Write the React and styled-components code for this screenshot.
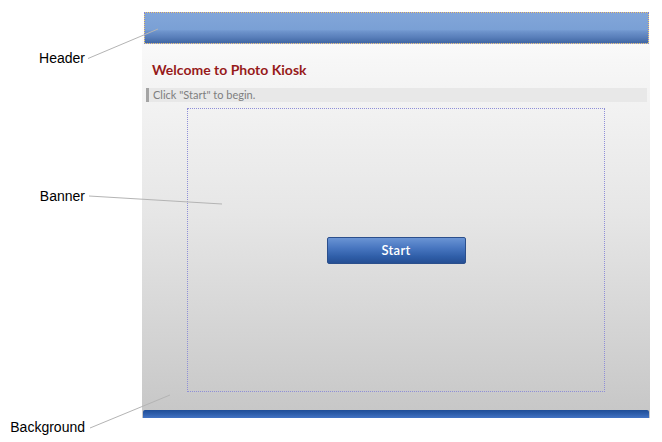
import styled, { createGlobalStyle } from "styled-components";

const GlobalStyle = createGlobalStyle`
  html, body {
    margin: 0;
    padding: 0;
    background: #fff;
  }
`;

const App = () => {
  return (
    <>
      <GlobalStyle />
      <Page>
        <Side>
          <Callout $top={37}>Header</Callout>
          <Callout $top={120}>Banner</Callout>
          <Callout $top={213}>Background</Callout>
        </Side>

        <Screen>
          <Header />
          <Title>Welcome to Photo Kiosk</Title>
          <Hint>
            <HintMark />
            <HintText>Click "Start" to begin.</HintText>
          </Hint>
          <Banner>
            <StartButton>Start</StartButton>
          </Banner>
          <Footer />
        </Screen>

        <Leaders viewBox="0 0 662 442" width="662" height="442">
          <line x1="88" y1="58.5" x2="158" y2="29" />
          <line x1="89" y1="196" x2="222" y2="204" />
          <line x1="90" y1="428" x2="170" y2="395" />
        </Leaders>
      </Page>
    </>
  );
};

export default App;

const Page = styled.div`
  position: relative;
  display: flex;
  width: 662px;
  height: 442px;
  padding-top: 12px;
  box-sizing: border-box;
  overflow: hidden;
`;

const Side = styled.div`
  width: 142px;
  flex-shrink: 0;
  display: flex;
  flex-direction: column;
  align-items: flex-end;
  padding-right: 57px;
  box-sizing: border-box;
`;

const Callout = styled.div`
  margin-top: ${(p) => p.$top}px;
  font-family: "Liberation Sans", Arial, sans-serif;
  font-size: 14px;
  line-height: 18px;
  color: #000;
`;

const Screen = styled.div`
  width: 508px;
  height: 406px;
  display: flex;
  flex-direction: column;
  background: linear-gradient(
    to bottom,
    #ffffff 0%,
    #f7f7f7 12%,
    #e6e6e6 50%,
    #d0d0d0 85%,
    #c6c6c6 100%
  );
`;

const Header = styled.div`
  height: 32px;
  margin: 0 1px 0 2px;
  box-sizing: border-box;
  border: 1px solid #e2d66a;
  outline: 1px dotted #7c7ce0;
  outline-offset: -1px;
  background: linear-gradient(
    to bottom,
    #82a6d9 0%,
    #7aa0d5 55%,
    #6d93cb 62%,
    #5a80bb 80%,
    #3f67a3 100%
  );
`;

const Title = styled.div`
  margin: 16px 0 0 10px;
  height: 19px;
  font-family: Lato, "Open Sans", sans-serif;
  font-weight: 700;
  font-size: 14px;
  line-height: 19px;
  color: #961a1a;
  text-shadow: 0 1px 0 rgba(255, 255, 255, 0.6);
`;

const Hint = styled.div`
  display: flex;
  align-items: stretch;
  height: 14px;
  margin: 9px 3px 0 4px;
  background: #e8e8e8;
`;

const HintMark = styled.div`
  width: 3px;
  background: #a4a4a4;
`;

const HintText = styled.span`
  padding-left: 4px;
  font-family: Lato, "Open Sans", sans-serif;
  font-size: 11px;
  line-height: 14px;
  color: #7e7e7e;
`;

const Banner = styled.div`
  width: 418px;
  height: 284px;
  margin: 6px 0 0 45px;
  box-sizing: border-box;
  border: 1px dotted #8f8fd8;
  display: flex;
  align-items: center;
  justify-content: center;
`;

const StartButton = styled.button`
  width: 139px;
  height: 27px;
  padding: 0;
  border: 1px solid #2b4f8c;
  border-radius: 2px;
  background: linear-gradient(
    to bottom,
    #6a94d4 0%,
    #4876c0 40%,
    #2f5ea8 75%,
    #264f94 100%
  );
  font-family: Lato, "Open Sans", sans-serif;
  font-weight: 600;
  font-size: 13px;
  color: #fff;
  letter-spacing: 0.3px;
  cursor: pointer;
`;

const Footer = styled.div`
  height: 8px;
  margin: 18px 1px 0 1px;
  border-radius: 2px 2px 0 0;
  background: linear-gradient(to bottom, #1f4d97 0%, #2e5eab 50%, #4474c4 100%);
`;

const Leaders = styled.svg`
  position: absolute;
  left: 0;
  top: 0;
  pointer-events: none;

  line {
    stroke: #b4b4b4;
    stroke-width: 1;
  }
`;
